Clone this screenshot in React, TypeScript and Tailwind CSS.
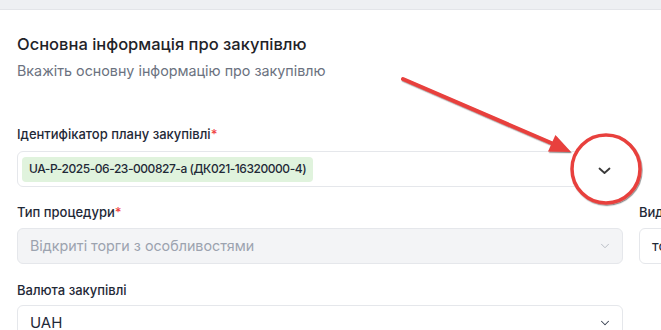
import React from "react";
import { ChevronDown } from "lucide-react";

function Label({ text, req }: { text: string; req?: boolean }) {
  return (
    <div className="text-[13px] leading-[20px] font-medium text-[#1f2937] whitespace-nowrap">
      {text}
      {req && <span className="text-[#ef4444]">*</span>}
    </div>
  );
}

export default function App() {
  return (
    <div
      className="relative w-[661px] h-[330px] overflow-hidden bg-white"
      style={{ fontFamily: "Inter, Roboto, 'Noto Sans', sans-serif" }}
    >
      <div className="h-[10px] bg-[#eef0f3] border-b border-[#e3e5e9]" />
      <div className="px-[17px]">
        <div className="mt-[22px] text-[16.5px] leading-[24px] font-medium text-[#1f2328] whitespace-nowrap">
          Основна інформація про закупівлю
        </div>
        <div className="mt-[5px] text-[14.3px] leading-[20px] text-[#6b7280] whitespace-nowrap">
          Вкажіть основну інформацію про закупівлю
        </div>

        <div className="grid grid-cols-[606px_606px] gap-x-[16px] mt-[43px]">
          <div className="flex flex-col">
            <Label text="Ідентифікатор плану закупівлі" req />
            <div className="mt-[7px] h-[36px] rounded-[6px] border border-[#e5e7eb] flex items-center pl-[4px] pr-[12px]">
              <div className="h-[25px] px-[7px] rounded-[4px] bg-[#e0f3dd] flex items-center text-[12px] tracking-[-0.45px] font-medium text-[#1f2937] whitespace-nowrap">
                UA-P-2025-06-23-000827-a (ДК021-16320000-4)
              </div>
              <div className="flex-1" />
            </div>
          </div>
          <div />

          <div className="flex flex-col mt-[15px]">
            <Label text="Тип процедури" req />
            <div className="mt-[6px] h-[36px] rounded-[6px] border border-[#e5e7eb] bg-[#f3f4f6] flex items-center pl-[12px] pr-[10px]">
              <span className="text-[14.3px] text-[#9ca3af] whitespace-nowrap">
                Відкриті торги з особливостями
              </span>
              <div className="flex-1" />
              <ChevronDown size={14} strokeWidth={1.5} className="text-[#b0b5bd]" />
            </div>
          </div>
          <div className="flex flex-col mt-[15px]">
            <Label text="Вид предмету закупівлі" req />
            <div className="mt-[6px] h-[36px] rounded-[6px] border border-[#e5e7eb] bg-white flex items-center pl-[12px] pr-[12px]">
              <span className="text-[14.3px] text-[#1f2937] whitespace-nowrap">товари</span>
            </div>
          </div>

          <div className="flex flex-col mt-[16px]">
            <Label text="Валюта закупівлі" />
            <div className="mt-[5px] h-[36px] rounded-[6px] border border-[#e5e7eb] bg-white flex items-center pl-[12px] pr-[10px]">
              <span className="text-[15px] text-[#1f2937]">UAH</span>
              <div className="flex-1" />
              <ChevronDown size={14} strokeWidth={1.75} className="text-[#374151]" />
            </div>
          </div>
          <div />
        </div>
      </div>

      <svg
        className="absolute left-0 top-0 pointer-events-none"
        width="661"
        height="330"
        viewBox="0 0 661 330"
      >
        <defs>
          <filter id="sh" x="-20%" y="-20%" width="140%" height="140%">
            <feDropShadow dx="0.8" dy="1.2" stdDeviation="0.6" floodColor="#000" floodOpacity="0.45" />
          </filter>
        </defs>
        <g filter="url(#sh)">
          <line x1="403" y1="79" x2="556" y2="145" stroke="#e8403d" strokeWidth="4" strokeLinecap="round" />
          <polygon points="571,152 548,151.6 555.4,135" fill="#e8403d" />
          <circle cx="606" cy="169" r="34" fill="#ffffff" stroke="#e8403d" strokeWidth="3.5" />
        </g>
        <path d="M599.5 168.5 L604.5 173 L609.5 168.5" fill="none" stroke="#3a3a3a" strokeWidth="1.8" strokeLinecap="round" strokeLinejoin="round" />
      </svg>
    </div>
  );
}
